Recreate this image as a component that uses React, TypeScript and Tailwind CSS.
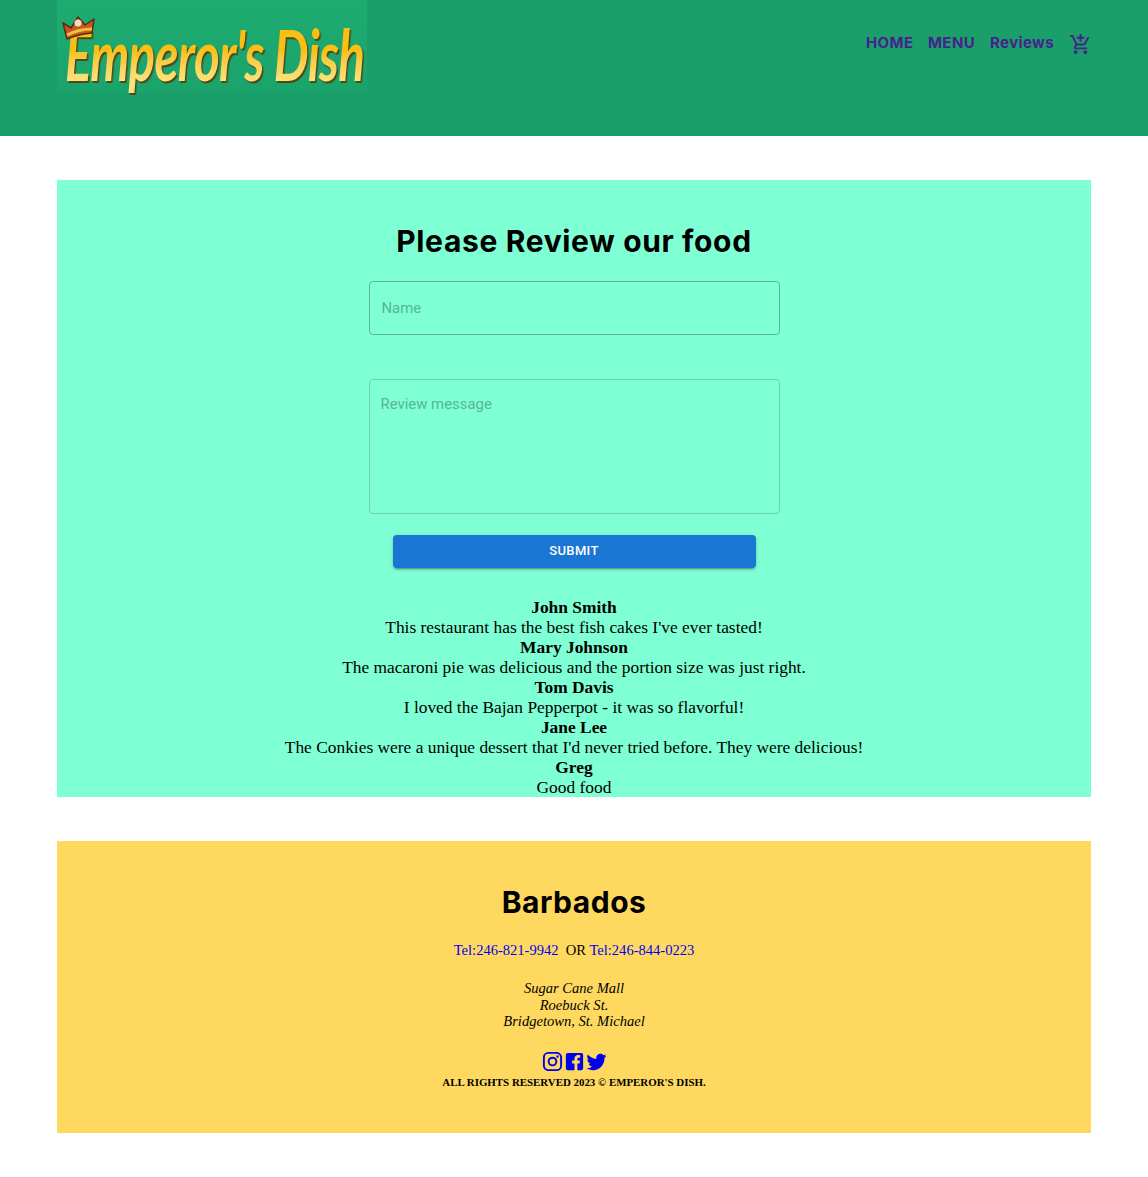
import React from "react";
import { MdOutlineAddShoppingCart } from "react-icons/md";

const reviews = [
  ["John Smith", "This restaurant has the best fish cakes I've ever tasted!"],
  ["Mary Johnson", "The macaroni pie was delicious and the portion size was just right."],
  ["Tom Davis", "I loved the Bajan Pepperpot - it was so flavorful!"],
  ["Jane Lee", "The Conkies were a unique dessert that I'd never tried before. They were delicious!"],
  ["Greg", "Good food"],
];

function Crown() {
  return (
    <svg width="36" height="28" viewBox="0 0 36 28" className="absolute left-[4px] top-[14px] z-10">
      <path d="M2 9 L10 14 L17 3 L24 11 L33 5 L31 19 Q18 20 6 25 Z" fill="#c8571f" stroke="#5a2a10" strokeWidth="1.5" strokeLinejoin="round" />
      <path d="M6 21 Q18 15 31 15" stroke="#f2c13c" strokeWidth="3" fill="none" />
      <circle cx="17" cy="9" r="3.5" fill="#f4dcc0" />
    </svg>
  );
}

function Instagram() {
  return (
    <svg viewBox="0 0 24 24" fill="currentColor" className="w-[23px] h-[23px]">
      <path d="M7.8 2h8.4C19.4 2 22 4.6 22 7.8v8.4a5.8 5.8 0 0 1-5.8 5.8H7.8C4.6 22 2 19.4 2 16.2V7.8A5.8 5.8 0 0 1 7.8 2m-.2 2A3.6 3.6 0 0 0 4 7.6v8.8C4 18.39 5.61 20 7.6 20h8.8a3.6 3.6 0 0 0 3.6-3.6V7.6C20 5.61 18.39 4 16.4 4H7.6m9.65 1.5a1.25 1.25 0 0 1 1.25 1.25A1.25 1.25 0 0 1 17.25 8 1.25 1.25 0 0 1 16 6.75a1.25 1.25 0 0 1 1.25-1.25M12 7a5 5 0 0 1 5 5 5 5 0 0 1-5 5 5 5 0 0 1-5-5 5 5 0 0 1 5-5m0 2a3 3 0 0 0-3 3 3 3 0 0 0 3 3 3 3 0 0 0 3-3 3 3 0 0 0-3-3z" />
    </svg>
  );
}

function Facebook() {
  return (
    <svg viewBox="0 0 24 24" fill="currentColor" className="w-[23px] h-[23px]">
      <path d="M5 3h14a2 2 0 0 1 2 2v14a2 2 0 0 1-2 2h-4v-7h2.3l.4-3H15V9.5c0-.8.2-1.4 1.4-1.4H18V5.4c-.3 0-1.1-.1-2.2-.1-2.2 0-3.8 1.4-3.8 3.9V11H9.5v3H12v7H5a2 2 0 0 1-2-2V5a2 2 0 0 1 2-2z" />
    </svg>
  );
}

function Twitter() {
  return (
    <svg viewBox="0 0 24 24" fill="currentColor" className="w-[23px] h-[23px]">
      <path d="M22.46 6c-.77.35-1.6.58-2.46.69.88-.53 1.56-1.37 1.88-2.38-.83.5-1.75.85-2.72 1.05C18.37 4.5 17.26 4 16 4c-2.35 0-4.27 1.92-4.27 4.29 0 .34.04.67.11.98C8.28 9.09 5.11 7.38 3 4.79c-.37.63-.58 1.37-.58 2.15 0 1.49.75 2.81 1.91 3.56-.71 0-1.37-.2-1.95-.5v.03c0 2.08 1.48 3.82 3.44 4.21a4.22 4.22 0 0 1-1.93.07 4.28 4.28 0 0 0 4 2.98 8.521 8.521 0 0 1-5.33 1.84c-.34 0-.68-.02-1.02-.06C3.44 20.29 5.7 21 8.12 21 16 21 20.33 14.46 20.33 8.79c0-.19 0-.37-.01-.56.84-.6 1.56-1.36 2.14-2.23z" />
    </svg>
  );
}

export default function App() {
  return (
    <div className="bg-white font-['Liberation_Serif',serif] pb-[44px]">
      <header className="h-[136px] bg-[#1a9f6b] px-[57px] flex justify-between items-start">
        <div className="relative w-[310px] h-[92px] bg-gradient-to-b from-[#1eac72] to-[#1ba36c]">
          <Crown />
          <span className="absolute left-[8px] top-[15px] whitespace-nowrap origin-left scale-x-[0.705] text-[70px] leading-[78px] italic font-bold font-['Lato',sans-serif] tracking-[-1px] pr-[8px] bg-gradient-to-b from-[#f9bf14] from-[45%] to-[#ffe27a] to-[85%] bg-clip-text text-transparent [filter:drop-shadow(2px_2px_0_#4a4a1a)]">
            Emperor's Dish
          </span>
        </div>
        <nav className="flex items-center h-[87px] mr-[-1px] text-[#45238c] font-bold text-[15px] tracking-[0.4px] font-['Inter',sans-serif]">
          <a className="w-[48px] mr-[14px] whitespace-nowrap">HOME</a>
          <a className="w-[47px] mr-[15px] whitespace-nowrap">MENU</a>
          <a className="w-[64px] mr-[15px] whitespace-nowrap">Reviews</a>
          <MdOutlineAddShoppingCart className="w-[23px] h-[23px] mt-[2px]" />
        </nav>
      </header>

      <main className="mx-[57px] mt-[44px] h-[617px] bg-[#7fffd4] pt-[43px] flex flex-col items-center overflow-hidden">
        <h1 className="text-[30px] leading-[36px] font-bold text-black tracking-[0.65px] font-['Inter',sans-serif] mb-[22px]">Please Review our food</h1>
        <div className="w-[411px] h-[54px] border border-[#5bb59a] rounded-[4px] px-[12px] pt-[1px] flex items-center text-[14.9px] text-[#58b595] font-['Roboto',sans-serif] shrink-0">
          Name
        </div>
        <div className="w-[411px] h-[135px] mt-[44px] border border-[#6dcfb0] rounded-[4px] px-[11px] py-[14px] text-[14.9px] leading-[20px] text-[#58b595] font-['Roboto',sans-serif] shrink-0">
          Review message
        </div>
        <button className="w-[363px] h-[33px] mt-[21px] bg-[#1976d2] text-white rounded-[4px] text-[13px] font-medium pb-[1px] font-['Roboto',sans-serif] tracking-[0.35px] shadow-[0_3px_1px_-2px_rgba(0,0,0,0.2),0_2px_2px_0_rgba(0,0,0,0.14),0_1px_5px_0_rgba(0,0,0,0.12)] shrink-0">
          SUBMIT
        </button>
        <div className="mt-[29px] text-center text-[17.4px] leading-[20px] text-black">
          {reviews.map(([n, m]) => (
            <div key={n}>
              <div className="font-bold">{n}</div>
              <div>{m}</div>
            </div>
          ))}
        </div>
      </main>

      <footer className="mx-[57px] mt-[44px] h-[292px] bg-[#ffd95f] pt-[43px] flex flex-col items-center text-black">
        <h2 className="text-[30px] leading-[36px] font-bold tracking-[0.5px] font-['Inter',sans-serif]">Barbados</h2>
        <p className="mt-[21px] text-[14.55px] leading-[18px]">
          <a className="text-[#0000ee]">Tel:246-821-9942</a>
          <span>&nbsp; OR </span>
          <a className="text-[#0000ee]">Tel:246-844-0223</a>
        </p>
        <address className="mt-[21px] text-[14.55px] leading-[16.5px] italic text-center">
          <div>Sugar Cane Mall</div>
          <div>Roebuck St.</div>
          <div>Bridgetown, St. Michael</div>
        </address>
        <div className="mt-[20px] ml-[1px] flex items-center -space-x-[1px] text-[#0000ee]">
          <Instagram />
          <Facebook />
          <Twitter />
        </div>
        <p className="mt-[2px] text-[10.9px] leading-[14px] font-bold">ALL RIGHTS RESERVED 2023 © EMPEROR'S DISH.</p>
      </footer>
    </div>
  );
}
